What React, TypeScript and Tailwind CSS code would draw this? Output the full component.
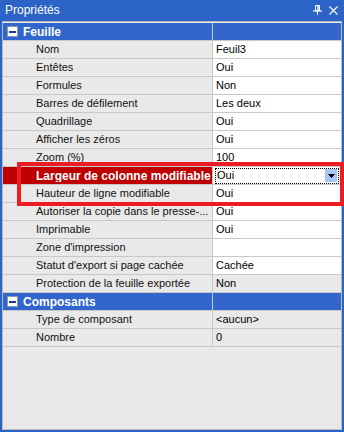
import React from "react";

type Row = {
  label?: string;
  value?: string;
  group?: boolean;
  readOnly?: boolean;
  selected?: boolean;
};

const rows: Row[] = [
  { label: "Feuille", group: true },
  { label: "Nom", value: "Feuil3" },
  { label: "Entêtes", value: "Oui" },
  { label: "Formules", value: "Non" },
  { label: "Barres de défilement", value: "Les deux" },
  { label: "Quadrillage", value: "Oui" },
  { label: "Afficher les zéros", value: "Oui" },
  { label: "Zoom (%)", value: "100" },
  { label: "Largeur de colonne modifiable", value: "Oui", selected: true },
  { label: "Hauteur de ligne modifiable", value: "Oui" },
  { label: "Autoriser la copie dans le presse-...", value: "Oui" },
  { label: "Imprimable", value: "Oui" },
  { label: "Zone d'impression", value: "" },
  { label: "Statut d'export si page cachée", value: "Cachée" },
  { label: "Protection de la feuille exportée", value: "Non", readOnly: true },
  { label: "Composants", group: true },
  { label: "Type de composant", value: "<aucun>", readOnly: true },
  { label: "Nombre", value: "0", readOnly: true },
];

function MinusBox() {
  return (
    <div className="w-[11px] h-[11px] bg-white border border-[#7f9db9] flex items-center justify-center">
      <div className="w-[7px] h-[2px] bg-[#1c3f8c]" />
    </div>
  );
}

function GroupRow({ label }: { label: string }) {
  return (
    <div className="flex h-[18px] bg-[#3366cc] border-b border-[#c8c8c8]">
      <div className="w-[210px] flex items-center pl-[4px] gap-[5px] border-r border-[#c8c8c8]">
        <MinusBox />
        <span className="text-white font-bold text-[12px] leading-none">{label}</span>
      </div>
      <div className="flex-1" />
    </div>
  );
}

function PropRow({ row }: { row: Row }) {
  if (row.selected) {
    return (
      <div className="flex h-[18px] border-b border-[#c8c8c8]">
        <div className="w-[210px] bg-[#c00000] flex items-center pl-[33px] border-r border-[#c8c8c8]">
          <span className="text-white font-bold text-[12px] leading-none whitespace-nowrap overflow-hidden">
            {row.label}
          </span>
        </div>
        <div className="flex-1 bg-white flex items-center pl-[2px] pr-[2px]">
          <div className="flex-1 h-[16px] border border-dotted border-black flex items-center justify-between pl-[1px] pr-[1px]">
            <span className="text-[11px] leading-none text-black">{row.value}</span>
            <div className="w-[12px] h-[13px] bg-[#a9c3f4] flex items-center justify-center">
              <svg width="7" height="4" viewBox="0 0 7 4">
                <path d="M0 0h7L3.5 4z" fill="#000" />
              </svg>
            </div>
          </div>
        </div>
      </div>
    );
  }
  return (
    <div className="flex h-[18px] border-b border-[#c8c8c8]">
      <div className="w-[210px] flex items-center pl-[33px] pr-[2px] border-r border-[#c8c8c8]">
        <span className="text-[11px] leading-none text-[#111] whitespace-nowrap overflow-hidden">
          {row.label}
        </span>
      </div>
      <div
        className={
          row.readOnly
            ? "flex-1 flex items-center pl-[3px]"
            : "flex-1 bg-white flex items-center pl-[3px]"
        }
      >
        <span className="text-[11px] leading-none text-black whitespace-nowrap">{row.value}</span>
      </div>
    </div>
  );
}

export default function App() {
  return (
    <div
      className="relative w-[344px] h-[434px] bg-white"
      style={{ fontFamily: '"Liberation Sans", Arial, sans-serif' }}
    >
      <div className="h-[432px] flex flex-col bg-[#2b63c7] px-[2px] pb-[2px]">
        <div className="h-[20px] flex items-center justify-between pl-[3px] pr-[4px]">
          <span className="text-white text-[12px] leading-none">Propriétés</span>
          <div className="flex items-center gap-[7px]">
            <svg width="9" height="10" viewBox="0 0 9 10">
              <path d="M2.5 0.5h4v5h-4z" fill="none" stroke="#fff" />
              <path d="M5 1v4.5" stroke="#fff" strokeWidth="1.4" />
              <path d="M0 6h9" stroke="#fff" strokeWidth="1.2" />
              <path d="M4.5 6v4" stroke="#fff" />
            </svg>
            <svg width="9" height="9" viewBox="0 0 9 9">
              <path d="M0.5 0.5l8 8M8.5 0.5l-8 8" stroke="#fff" strokeWidth="1.1" />
            </svg>
          </div>
        </div>
        <div className="flex-1 mt-[1px] bg-[#e9e9e9] border border-[#b9b9b9] pt-[1px]">
          {rows.map((r, i) =>
            r.group ? <GroupRow key={i} label={r.label!} /> : <PropRow key={i} row={r} />
          )}
        </div>
      </div>
      <div className="absolute left-[17px] top-[162px] w-[327px] h-[44px] border-[4px] border-[#ed1c24]" />
    </div>
  );
}
